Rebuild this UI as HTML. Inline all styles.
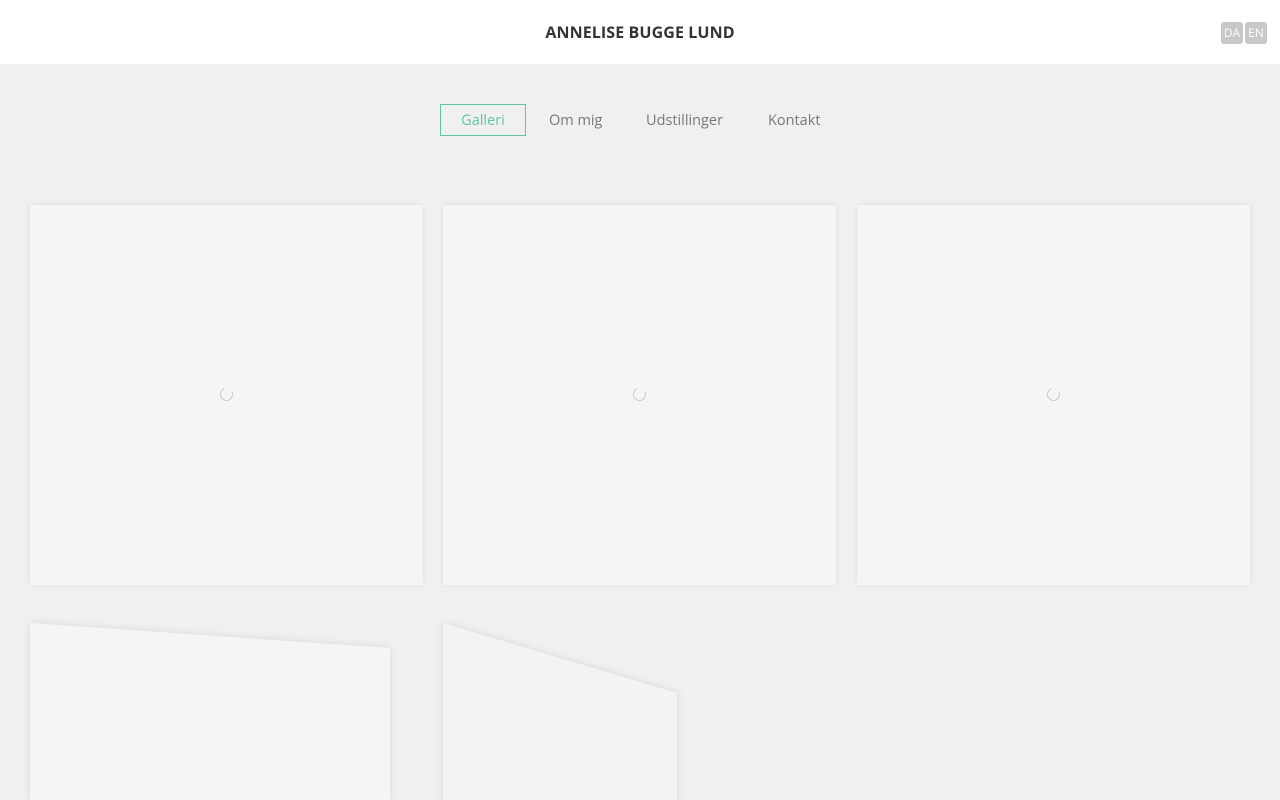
<!DOCTYPE html>
<html><head><meta charset="utf-8"><style>
*{margin:0;padding:0;box-sizing:border-box}
html{overflow:hidden;height:800px}
body{width:1280px;height:800px;overflow:hidden;background:#f0f0f0;font-family:"Open Sans","Liberation Sans",sans-serif;position:relative}
.hdr{position:absolute;left:0;top:0;width:1280px;height:64px;background:#fff}
.hdr h1{position:absolute;left:0;width:1280px;top:21px;text-align:center;font-size:16px;font-weight:bold;color:#333;letter-spacing:0.1px}
.lang{position:absolute;top:22px;width:22px;height:22px;background:#c8c8c8;color:#fff;font-size:12px;line-height:22px;text-align:center;border-radius:3px}
nav a{position:absolute;top:105px;height:32px;line-height:32px;font-size:14.5px;color:#777;text-decoration:none}
nav a.act{left:440px;top:104px;width:86px;border:1px solid #5fc6a4;color:#5fc6a4;text-align:center;line-height:31px}
.card{position:absolute;background:#f5f5f5;box-shadow:0 0 6px rgba(0,0,0,0.08)}
.sp{position:absolute;width:13px;height:13px;border:1.5px solid #c9c9c9;border-top-color:transparent;border-right-color:#c9c9c9;border-radius:50%;transform:rotate(20deg)}
.sh{position:absolute;filter:drop-shadow(0 0 4px rgba(0,0,0,0.1))}
.sh div{width:100%;height:100%;background:#f5f5f5}
</style></head><body>
<div class="hdr"><h1>ANNELISE BUGGE LUND</h1>
<div class="lang" style="left:1221px">DA</div><div class="lang" style="left:1245px">EN</div></div>
<nav><a class="act">Galleri</a><a style="left:549px">Om mig</a><a style="left:646px">Udstillinger</a><a style="left:768px">Kontakt</a></nav>
<div class="card" style="left:30px;top:205px;width:393px;height:380px"><div class="sp" style="left:190px;top:183px"></div></div>
<div class="card" style="left:443px;top:205px;width:393px;height:380px"><div class="sp" style="left:190px;top:183px"></div></div>
<div class="card" style="left:857px;top:205px;width:393px;height:380px"><div class="sp" style="left:190px;top:183px"></div></div>
<div class="sh" style="left:30px;top:623px;width:360px;height:177px"><div style="clip-path:polygon(0 0,100% 25px,100% 100%,0 100%)"></div></div>
<div class="sh" style="left:443px;top:623px;width:234px;height:177px"><div style="background:#f3f3f3;clip-path:polygon(0 0,100% 70px,100% 100%,0 100%)"></div></div>
</body></html>
